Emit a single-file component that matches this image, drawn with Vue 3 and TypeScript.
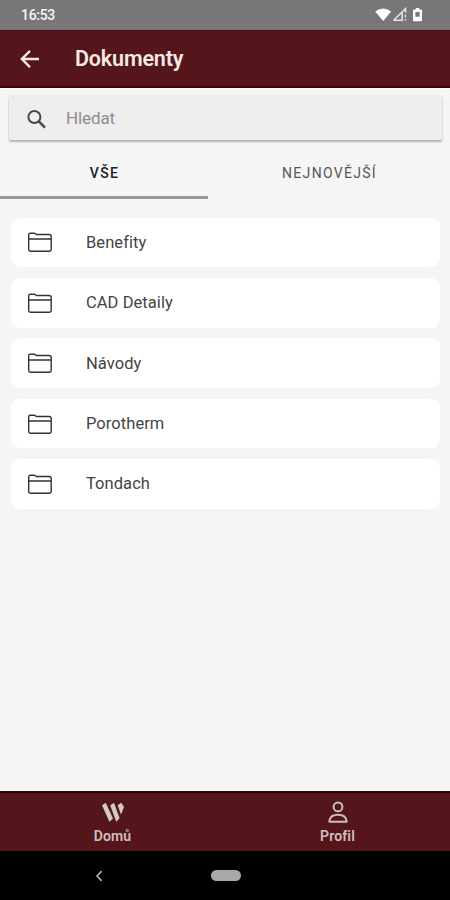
<script setup lang="ts">
import { ref } from 'vue'

const folders: string[] = ['Benefity', 'CAD Detaily', 'Návody', 'Porotherm', 'Tondach']
const activeTab = ref<number>(0)
const tabs: string[] = ['VŠE', 'NEJNOVĚJŠÍ']
</script>

<template>
  <div class="screen">
    <div class="status">
      <span class="time">16:53</span>
      <svg class="status-icons" width="50" height="16" viewBox="0 0 50 16">
        <path d="M0.2 4.6 Q8 -1.8 16.2 4.6 L8.2 14 Z" fill="#fff" />
        <path d="M18.8 13 L30.6 1.6 V5.8 M18.5 13.3 H28 M27.2 6 V13" fill="none" stroke="#e6e6e6" stroke-width="1.5" />
        <path d="M30.4 7.5 V10.5 M30.4 12 V13.8" stroke="#dedede" stroke-width="1.3" />
        <path fill-rule="evenodd" d="M40.8 1 h3.4 v1.5 h1.8 q1 0 1 1 v9.7 q0 1-1 1 h-7 q-1 0-1-1 V3.5 q0-1 1-1 h1.8z M40.4 5 v4.8 h4.2 V5z" fill="#fff" />
      </svg>
    </div>
    <header class="appbar">
      <svg class="back" width="20" height="20" viewBox="0 0 20 20">
        <path d="M19 10 H2 M10 1.8 L1.8 10 L10 18.2" fill="none" stroke="#f6e9e2" stroke-width="2.4" />
      </svg>
      <h1>Dokumenty</h1>
    </header>
    <main>
      <div class="search">
        <svg width="20" height="20" viewBox="0 0 20 20">
          <circle cx="7.4" cy="7" r="6" fill="none" stroke="#484848" stroke-width="2" />
          <path d="M11.6 11.2 L18 17.6" stroke="#484848" stroke-width="2.5" />
        </svg>
        <span>Hledat</span>
      </div>
      <nav class="tabs">
        <div v-for="(tab, i) in tabs" :key="tab" class="tab" :class="{ active: i === activeTab }" @click="activeTab = i">
          <span>{{ tab }}</span>
        </div>
      </nav>
      <div class="list">
        <div v-for="name in folders" :key="name" class="row">
          <svg width="26" height="22" viewBox="0 0 26 22">
            <path d="M1.7 18.6 V3.8 Q1.7 2.2 3.3 2.2 H7.2 Q8.4 2.2 9.2 3.5 H22 Q24.2 3.5 24.2 5.6 V18.6 Q24.2 20.2 22.5 20.2 H3.4 Q1.7 20.2 1.7 18.6 Z M1.7 8 H24.2" fill="none" stroke="#333" stroke-width="1.4" />
          </svg>
          <span>{{ name }}</span>
        </div>
      </div>
    </main>
    <footer class="bottom">
      <div class="dest">
        <svg width="24" height="22" viewBox="0 0 24 22">
          <g fill="#d5c9c5">
            <path d="M1 4.2 L4.8 1.8 L12 17.6 L8.4 20.8 Z" />
            <path d="M9.2 4.2 L13 1.8 L18.6 17.2 L15.2 20.8 Z" />
            <path d="M16.6 4.2 L20.2 1.8 L23 6 L20 13.4 Z" />
          </g>
        </svg>
        <span>Domů</span>
      </div>
      <div class="dest">
        <svg width="24" height="22" viewBox="0 0 24 22">
          <circle cx="12" cy="5.9" r="4.4" fill="none" stroke="#cfc0bd" stroke-width="2" />
          <path d="M3.8 20.8 Q3 20.8 3.4 19.5 Q4.6 13.8 12 13.8 Q19.4 13.8 20.6 19.5 Q21 20.8 20.2 20.8 Z" fill="none" stroke="#cfc0bd" stroke-width="2" />
        </svg>
        <span>Profil</span>
      </div>
    </footer>
    <div class="system">
      <svg width="8" height="12" viewBox="0 0 8 12">
        <path d="M6.7 1.2 L2 6 L6.7 10.8" fill="none" stroke="#aaa" stroke-width="1.7" />
      </svg>
      <div class="pill"></div>
      <span></span>
    </div>
  </div>
</template>

<style>
body {
  background: #f5f5f5;
}
</style>

<style scoped>
.screen {
  display: flex;
  flex-direction: column;
  width: 450px;
  height: 900px;
  overflow: hidden;
  font-family: Roboto, "Liberation Sans", sans-serif;
  background: #f5f5f5;
}
.screen svg {
  display: block;
  flex: none;
}
.status {
  display: flex;
  align-items: center;
  justify-content: space-between;
  box-sizing: border-box;
  height: 30px;
  padding: 0 25px 0 21px;
  background: #777;
  color: #f5f5f5;
}
.time {
  font-size: 14px;
  font-weight: 500;
  letter-spacing: -0.3px;
}
.appbar {
  display: flex;
  align-items: center;
  box-sizing: border-box;
  height: 58px;
  padding: 0 20px;
  background: #54151b;
  border-top: 1px solid #430b10;
  border-bottom: 2px solid #410307;
}
.appbar h1 {
  margin: 0 0 0 35px;
  color: #f6e9e2;
  font-size: 21.5px;
  font-weight: 600;
  letter-spacing: -0.15px;
  line-height: 26px;
}
main {
  display: flex;
  flex: 1;
  flex-direction: column;
  border-top: 1px solid #fff;
  border-bottom: 1px solid #fff;
}
.search {
  display: flex;
  align-items: center;
  height: 44px;
  box-sizing: border-box;
  margin: 7px 8px 0 9px;
  padding: 3px 0 0 18px;
  border-radius: 2px;
  background: #eee;
  box-shadow: 0 2px 2px rgba(0, 0, 0, 0.26), 0 0 2px rgba(0, 0, 0, 0.1);
}
.search span {
  margin: -4px 0 0 19px;
  color: #8d8d8d;
  font-size: 17px;
  letter-spacing: -0.1px;
}
.tabs {
  display: flex;
  height: 59px;
}
.tab {
  display: flex;
  flex: 0 0 242px;
  align-items: center;
  justify-content: center;
  box-sizing: border-box;
  padding: 9px 0 0 1px;
  border-bottom: 3px solid transparent;
  color: #555;
  font-size: 14px;
  letter-spacing: 1.3px;
}
.tab.active {
  flex-basis: 208px;
  border-bottom-color: #999;
  color: #222;
  font-weight: 500;
}
.list {
  display: flex;
  flex-direction: column;
  gap: 10.6px;
  padding: 18.5px 10px 0 11px;
}
.row {
  display: flex;
  align-items: center;
  box-sizing: border-box;
  height: 49.8px;
  padding-left: 16px;
  border-radius: 9px;
  background: #fff;
}
.row span {
  margin-left: 33px;
  color: #444;
  font-size: 16.5px;
  letter-spacing: 0.06px;
}
.bottom {
  display: flex;
  box-sizing: border-box;
  height: 60px;
  background: #54151b;
  border-top: 2px solid #2c0508;
}
.dest {
  display: flex;
  flex: 1;
  flex-direction: column;
  align-items: center;
  padding-top: 8px;
  color: #cfc0bd;
  font-size: 14px;
  font-weight: 600;
  letter-spacing: 0.15px;
  line-height: 16px;
}
.dest span {
  margin-top: 5px;
}
.system {
  display: flex;
  align-items: center;
  justify-content: space-between;
  box-sizing: border-box;
  height: 49px;
  padding: 0 95px;
  background: #000;
}
.system span {
  width: 7px;
}
.pill {
  width: 30px;
  height: 11px;
  border-radius: 6px;
  background: #a8a8a8;
}
</style>
